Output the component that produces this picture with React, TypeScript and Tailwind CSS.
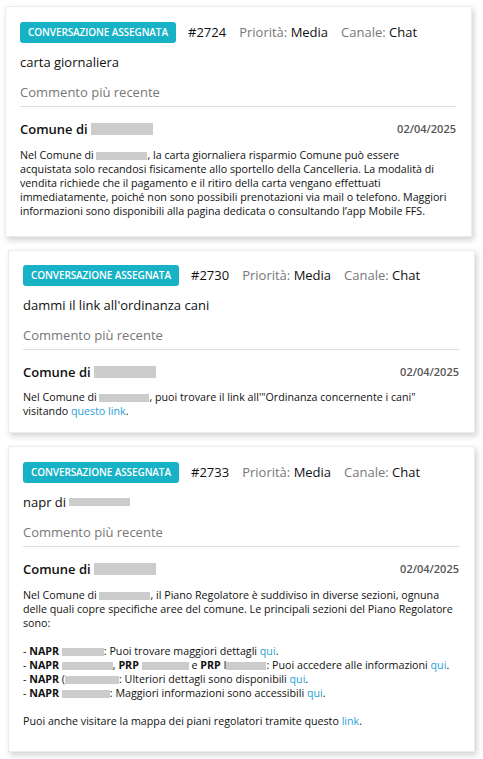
import React from "react";

const font = { fontFamily: '"Open Sans", "Liberation Sans", sans-serif' };

function R({ w, h = 8 }: { w: number; h?: number }) {
  return (
    <span
      className="inline-block bg-[#cccccc] align-[-1px]"
      style={{ width: w, height: h }}
    />
  );
}

function Header({ id }: { id: string }) {
  return (
    <div className="flex items-center h-[21px]">
      <span className="h-[21px] w-[156px] rounded-[3px] bg-[#17b2c6] text-white text-[10px] font-semibold uppercase flex items-center justify-center tracking-[-0.1px]">
        Conversazione assegnata
      </span>
      <span className="ml-[12px] text-[13px] text-[#111]">#{id}</span>
      <span className="ml-[13px] text-[13px] text-[#777]">
        Priorità: <span className="text-[#111]">Media</span>
      </span>
      <span className="ml-[13px] text-[13px] text-[#777]">
        Canale: <span className="text-[#111]">Chat</span>
      </span>
    </div>
  );
}

function Card({
  id,
  title,
  body,
  className,
}: {
  id: string;
  title: React.ReactNode;
  body: React.ReactNode;
  className: string;
}) {
  return (
    <div
      className={`w-[467px] bg-white border border-[#ececec] shadow-[2px_3px_6px_rgba(0,0,0,0.18)] pl-[14px] pr-[15px] ${className}`}
    >
      <Header id={id} />
      <div className="mt-[9px] text-[13px] leading-[20px] text-[#111]">{title}</div>
      <div className="mt-[10px] text-[13px] leading-[20px] text-[#777] pb-[4px] border-b border-[#dcdcdc]">
        Commento più recente
      </div>
      <div className="mt-[13px] flex items-center justify-between">
        <span className="text-[13px] leading-[18px] font-semibold text-[#111] flex items-center">
          Comune di&nbsp;<R w={62} h={12} />
        </span>
        <span className="text-[11px] text-[#555] font-semibold">02/04/2025</span>
      </div>
      <div className="mt-[10px] text-[10.7px] leading-[14px] text-[#111]">{body}</div>
    </div>
  );
}

const link = "text-[#2a9fd8]";

export default function App() {
  return (
    <div className="bg-white w-[483px] min-h-[759px] pt-[6px] flex flex-col gap-[13px]" style={font}>
      <Card
        id="2724"
        className="ml-[5px] pt-[15px] pb-[18px]"
        title="carta giornaliera"
        body={
          <p>
            Nel Comune di <R w={51} />, la carta giornaliera risparmio Comune può essere
            <br />
            acquistata solo recandosi fisicamente allo sportello della Cancelleria. La modalità di
            <br />
            vendita richiede che il pagamento e il ritiro della carta vengano effettuati
            <br />
            immediatamente, poiché non sono possibili prenotazioni via mail o telefono. Maggiori
            <br />
            informazioni sono disponibili alla pagina dedicata o consultando l’app Mobile FFS.
          </p>
        }
      />
      <Card
        id="2730"
        className="ml-[8px] pt-[14px] pb-[14px]"
        title="dammi il link all'ordinanza cani"
        body={
          <p className="-mt-[1px]">
            Nel Comune di <R w={50} />, puoi trovare il link all'"Ordinanza concernente i cani"
            visitando <span className={link}>questo link</span>.
          </p>
        }
      />
      <Card
        id="2733"
        className="ml-[8px] pt-[15px] pb-[23px]"
        title={
          <span className="flex items-center">
            napr di&nbsp;<R w={61} />
          </span>
        }
        body={
          <div>
            <p>
              Nel Comune di <R w={51} />, il Piano Regolatore è suddiviso in diverse sezioni, ognuna
              delle quali copre specifiche aree del comune. Le principali sezioni del Piano Regolatore
              sono:
            </p>
            <p className="mt-[14px]">
              - <b>NAPR</b> <R w={42} />: Puoi trovare maggiori dettagli <span className={link}>qui</span>.
            </p>
            <p>
              - <b>NAPR</b> <R w={51} />, <b>PRP</b> <R w={47} /> e <b>PRP</b> I<R w={40} />: Puoi accedere alle informazioni{" "}
              <span className={link}>qui</span>.
            </p>
            <p>
              - <b>NAPR</b> (<R w={54} />: Ulteriori dettagli sono disponibili <span className={link}>qui</span>.
            </p>
            <p>
              - <b>NAPR</b> <R w={48} />: Maggiori informazioni sono accessibili <span className={link}>qui</span>.
            </p>
            <p className="mt-[14px]">
              Puoi anche visitare la mappa dei piani regolatori tramite questo{" "}
              <span className={link}>link</span>.
            </p>
          </div>
        }
      />
    </div>
  );
}
